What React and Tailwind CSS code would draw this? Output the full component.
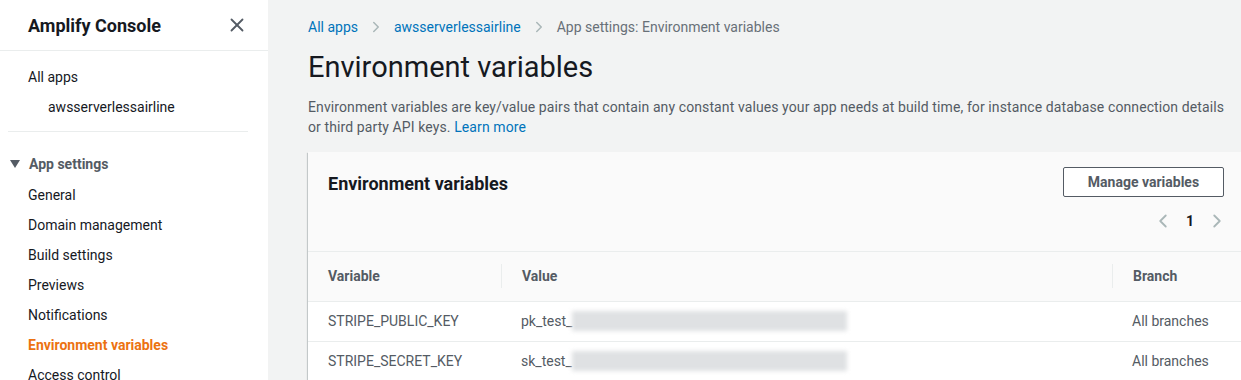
import React from 'react';
import { X, ChevronRight, ChevronLeft } from 'lucide-react';

const font = { fontFamily: 'Roboto, "Open Sans", sans-serif' };

const navItems = [
  'General',
  'Domain management',
  'Build settings',
  'Previews',
  'Notifications',
  'Environment variables',
  'Access control',
];

const rows = [
  { name: 'STRIPE_PUBLIC_KEY', prefix: 'pk_test_', branch: 'All branches' },
  { name: 'STRIPE_SECRET_KEY', prefix: 'sk_test_', branch: 'All branches' },
];

const Sidebar = () => (
  <aside className="w-[268px] shrink-0 bg-white h-full">
    <div className="h-[51px] flex items-center justify-between pl-[28px] pr-[20px] border-b border-[#eaeded]">
      <h2 className="text-[18px] font-bold text-[#16191f]">Amplify Console</h2>
      <X size={22} strokeWidth={2} className="text-[#545b64]" />
    </div>
    <div className="pt-[14px] pb-[6px] px-[28px]">
      <div className="h-[24px] flex items-center text-[14px] text-[#16191f]">All apps</div>
      <div className="h-[36px] flex items-center pl-[20px] text-[14px] text-[#16191f]">awsserverlessairline</div>
    </div>
    <div className="ml-[8px] mr-[20px] border-t border-[#eaeded]" />
    <div className="pt-[20px]">
      <div className="flex items-center h-[24px] pl-[10px] text-[14px] font-bold text-[#545b64]">
        <svg width="10" height="8" viewBox="0 0 10 8" className="mr-[9px]">
          <path d="M0 0 L10 0 L5 8 Z" fill="#545b64" />
        </svg>
        App settings
      </div>
      <ul className="mt-[4px]">
        {navItems.map((item) => (
          <li
            key={item}
            className={`h-[30px] flex items-center pl-[28px] text-[14px] ${
              item === 'Environment variables' ? 'text-[#ec7211] font-bold' : 'text-[#16191f]'
            }`}
          >
            {item}
          </li>
        ))}
      </ul>
    </div>
  </aside>
);

const Blurred = ({ w }) => (
  <span className="inline-block h-[20px] bg-[#dfe1e3] blur-[2px] align-middle" style={{ width: w }} />
);

export default function App() {
  return (
    <div className="flex h-[380px] w-[1241px] overflow-hidden" style={font}>
      <Sidebar />
      <main className="flex-1 bg-[#f2f3f3] pl-[40px] overflow-hidden">
        <nav className="flex items-center h-[20px] mt-[17px] text-[14px]">
          <a className="text-[#0073bb]">All apps</a>
          <ChevronRight size={18} className="text-[#aab7b8] mx-[9px]" />
          <a className="text-[#0073bb]">awsserverlessairline</a>
          <ChevronRight size={18} className="text-[#aab7b8] mx-[9px]" />
          <span className="text-[#687078]">App settings: Environment variables</span>
        </nav>
        <h1 className="mt-[12px] text-[29px] leading-[36px] text-[#16191f]">Environment variables</h1>
        <p className="mt-[12px] text-[14px] leading-[20px] text-[#545b64] w-[933px] whitespace-nowrap tracking-[0.1px]">
          Environment variables are key/value pairs that contain any constant values your app needs at build time, for instance database connection details
          <br />
          or third party API keys. <a className="text-[#0073bb]">Learn more</a>
        </p>
        <section className="mt-[15px] w-[936px] bg-white shadow-[0_1px_1px_0_rgba(0,28,36,0.3),1px_1px_1px_0_rgba(0,28,36,0.15),-1px_1px_1px_0_rgba(0,28,36,0.15)]">
          <div className="bg-[#fafafa] border-b border-[#eaeded] h-[100px] pl-[20px] pr-[20px] pt-[15px]">
            <div className="flex items-start justify-between">
              <h2 className="mt-[3px] text-[18px] font-bold text-[#16191f]">Environment variables</h2>
              <button className="w-[161px] h-[30px] border border-[#545b64] rounded-[2px] bg-white text-[14px] font-bold text-[#545b64]">
                Manage variables
              </button>
            </div>
            <div className="flex items-center justify-end mt-[12px] gap-[10px] h-[24px]">
              <ChevronLeft size={22} className="text-[#aab7b8]" />
              <span className="text-[14px] font-bold text-[#16191f] px-[2px]">1</span>
              <ChevronRight size={22} className="text-[#aab7b8] -mr-[4px]" />
            </div>
          </div>
          <table className="w-full text-[14px] border-collapse">
            <thead>
              <tr className="bg-[#fafafa] h-[49px] border-b border-[#eaeded] text-[#545b64]">
                <th className="w-[193px] text-left font-bold pl-[20px]">Variable</th>
                <th className="text-left font-bold pl-[20px]">
                  <div className="flex items-center h-[24px] border-l border-[#eaeded] pl-[20px] -ml-[20px]">Value</div>
                </th>
                <th className="w-[132px] text-left font-bold">
                  <div className="flex items-center h-[24px] border-l border-[#eaeded] pl-[20px]">Branch</div>
                </th>
              </tr>
            </thead>
            <tbody>
              {rows.map((r) => (
                <tr key={r.name} className="h-[40px] border-b border-[#eaeded] text-[#545b64]">
                  <td className="pl-[20px]">{r.name}</td>
                  <td className="pl-[20px]">
                    <span className="align-middle">{r.prefix}</span>
                    <Blurred w={275} />
                  </td>
                  <td className="pl-[20px]">{r.branch}</td>
                </tr>
              ))}
            </tbody>
          </table>
        </section>
      </main>
    </div>
  );
}
